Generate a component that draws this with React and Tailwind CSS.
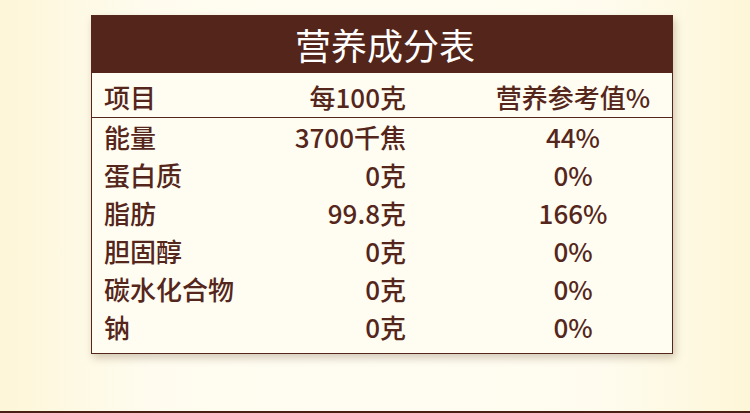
const rows = [
  { name: "能量", per: "3700千焦", nrv: "44%" },
  { name: "蛋白质", per: "0克", nrv: "0%" },
  { name: "脂肪", per: "99.8克", nrv: "166%" },
  { name: "胆固醇", per: "0克", nrv: "0%" },
  { name: "碳水化合物", per: "0克", nrv: "0%" },
  { name: "钠", per: "0克", nrv: "0%" },
];

const font = { fontFamily: '"Noto Sans CJK SC", "Noto Sans", sans-serif' };

export default function App() {
  return (
    <div
      className="w-[750px] h-[413px] overflow-hidden border-b-2 border-[#4a2014] bg-[linear-gradient(90deg,#fdf6d8_0%,#fffcef_20%,#fffdf2_50%,#fffcef_80%,#fdf6d8_100%)]"
      style={font}
    >
      <div className="ml-[91px] mt-[15px] w-[582px] h-[339px] bg-[#fffdf1] border border-[#55261b] shadow-[2px_4px_8px_rgba(80,50,20,0.25)] text-[#55261b]">
        <div className="h-[57px] bg-[#54251a] flex items-center justify-center text-white text-[36px] font-normal leading-none pb-[2px] pl-[6px]">
          营养成分表
        </div>
        <div className="grid grid-cols-[152px_150px_1fr] pl-3 h-[45px] items-end pb-[2px] border-b border-[#55261b] text-[26px] font-medium leading-[36px]">
          <span>项目</span>
          <span className="text-right">每100克</span>
          <span className="pl-[68px] text-center">营养参考值%</span>
        </div>
        {rows.map((r) => (
          <div
            key={r.name}
            className="grid grid-cols-[152px_150px_1fr] pl-3 h-[38px] items-center text-[26px] font-medium leading-none"
          >
            <span>{r.name}</span>
            <span className="text-right">{r.per}</span>
            <span className="pl-[68px] text-center">{r.nrv}</span>
          </div>
        ))}
      </div>
    </div>
  );
}
